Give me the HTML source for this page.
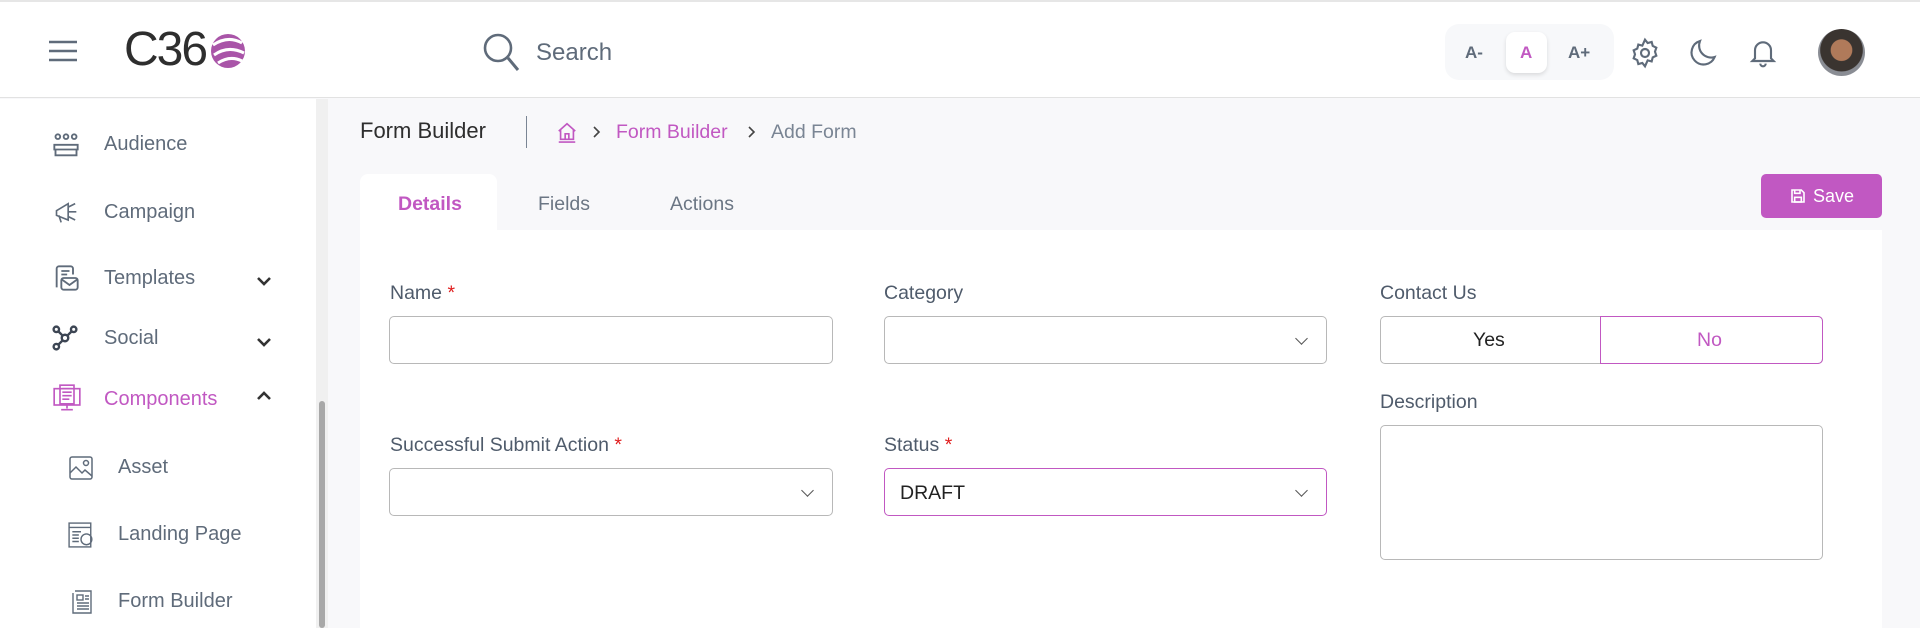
<!DOCTYPE html>
<html><head><meta charset="utf-8"><style>
*{box-sizing:border-box;margin:0;padding:0}
body{width:1920px;height:628px;overflow:hidden;background:#f8f8fa;font-family:"Liberation Sans",sans-serif;position:relative;color:#5f6b7a}
.abs{position:absolute}
#hdr{left:0;top:0;width:1920px;height:98px;background:#fff;border-top:2px solid #e6e6e6;border-bottom:1px solid #e2e2e2}
#side{left:0;top:99px;width:316px;height:529px;background:#fff}
.it{position:absolute;left:104px;font-size:20px;color:#5f6b7a}
.sub{left:118px}
.ic{position:absolute}
.chev{position:absolute;left:256px}
.lbl{position:absolute;font-size:19.5px;color:#4f5b6b}
.star{color:#e02020}
.inp{position:absolute;height:48px;border:1px solid #b8b8b8;border-radius:5px;background:#fff}
.dd::after{content:"";position:absolute;right:20px;top:17px;width:8px;height:8px;border-right:1.6px solid #555;border-bottom:1.6px solid #555;transform:rotate(45deg)}
</style></head><body>
<div id="hdr" class="abs">
 <svg class="abs" style="left:49px;top:38px" width="28" height="22"><g stroke="#5f6b7a" stroke-width="2.5"><line x1="0" y1="2" x2="28" y2="2"/><line x1="0" y1="11" x2="28" y2="11"/><line x1="0" y1="20" x2="28" y2="20"/></g></svg>
 <div class="abs" style="left:124px;top:20px;font-size:48px;color:#2e2e2e;letter-spacing:-2px">C36</div>
 <svg class="abs" style="left:208px;top:29px" width="40" height="40"><circle cx="20" cy="20" r="17" fill="#a955a8"/><path d="M5 14 Q20 4 34 12 M6 24 Q20 14 36 22 M10 32 Q22 24 34 30" stroke="#fff" stroke-width="3" fill="none"/></svg>
 <svg class="abs" style="left:482px;top:30px" width="40" height="40"><circle cx="16" cy="16" r="13" stroke="#5f6b7a" stroke-width="2.6" fill="none"/><line x1="26" y1="26" x2="36" y2="38" stroke="#5f6b7a" stroke-width="3"/></svg>
 <div class="abs" style="left:536px;top:37px;font-size:24px;color:#5f6b7a">Search</div>
 <div class="abs" style="left:1445px;top:22px;width:169px;height:56px;background:#f7f8fa;border-radius:14px"></div>
 <div class="abs" style="left:1506px;top:30px;width:41px;height:41px;background:#fff;border-radius:9px;box-shadow:0 2px 4px rgba(0,0,0,.12)"></div>
 <div class="abs" style="left:1465px;top:41px;font-size:17px;font-weight:bold;color:#5f6b7a">A-</div>
 <div class="abs" style="left:1520px;top:41px;font-size:17px;font-weight:bold;color:#c158c2">A</div>
 <div class="abs" style="left:1568px;top:41px;font-size:17px;font-weight:bold;color:#5f6b7a">A+</div>
 <svg class="abs" style="left:1629px;top:35px" width="32" height="32" viewBox="0 0 24 24" fill="none" stroke="#5f6b7a" stroke-width="1.6"><circle cx="12" cy="12" r="3"/><path d="M12 2l2 2.5 3-.8.8 3L20.5 8l-1 3 1 3-2.7 1.3-.8 3-3-.8L12 22l-2-2.5-3 .8-.8-3L3.5 16l1-3-1-3 2.7-1.3.8-3 3 .8z"/></svg>
 <svg class="abs" style="left:1688px;top:35px" width="32" height="32" viewBox="0 0 24 24" fill="none" stroke="#5f6b7a" stroke-width="1.6"><path d="M20 15A9 9 0 0 1 9 3a9 9 0 1 0 11 12z"/></svg>
 <svg class="abs" style="left:1747px;top:34px" width="32" height="34" viewBox="0 0 24 24" fill="none" stroke="#5f6b7a" stroke-width="1.6"><path d="M6 16V10a6 6 0 0 1 12 0v6l2 2H4z M10 20a2 2 0 0 0 4 0"/></svg>
 <div class="abs" style="left:1818px;top:27px;width:47px;height:47px;border-radius:50%;background:radial-gradient(circle at 50% 45%,#b07a5a 0 30%,#3a3430 32% 60%,#8a8d94 62%)"></div>
</div>
<div id="side" class="abs">
 <svg class="ic" style="left:52px;top:33px" width="28" height="28" viewBox="0 0 24 24" fill="none" stroke="#5f6b7a" stroke-width="1.6"><circle cx="5" cy="4" r="2"/><circle cx="12" cy="4" r="2"/><circle cx="19" cy="4" r="2"/><path d="M2 11h20v4H2zM3 15v5h18v-5"/></svg>
 <div class="it" style="top:34px">Audience</div>
 <svg class="ic" style="left:52px;top:100px" width="30" height="28" viewBox="0 0 24 24" fill="none" stroke="#5f6b7a" stroke-width="1.4"><path d="M3 10l10-6v14L3 14zM13 7l6-3M13 11h7M13 15l6 3M5 14l2 6"/></svg>
 <div class="it" style="top:102px">Campaign</div>
 <svg class="ic" style="left:52px;top:165px" width="28" height="28" viewBox="0 0 24 24" fill="none" stroke="#5f6b7a" stroke-width="1.6"><path d="M4 20V4a2 2 0 0 1 2-2h10a2 2 0 0 1 2 2v5M8 6h7M8 9h5"/><rect x="8" y="12" width="14" height="10" rx="2"/><path d="M8 13l7 5 7-5"/></svg>
 <div class="it" style="top:168px">Templates</div>
 <svg class="chev" style="top:177px" width="16" height="12"><path d="M2 2l6 6 6-6" stroke="#333" stroke-width="2.6" fill="none"/></svg>
 <svg class="ic" style="left:52px;top:226px" width="26" height="26" viewBox="0 0 24 24" fill="none" stroke="#3d4654" stroke-width="2.2"><circle cx="4" cy="4" r="2.5"/><circle cx="20" cy="4" r="2.5"/><circle cx="12" cy="12" r="3"/><circle cx="4" cy="20" r="2.5"/><path d="M6 6l4 4M18 6l-4 4M10 14l-4 4"/></svg>
 <div class="it" style="top:228px">Social</div>
 <svg class="chev" style="top:238px" width="16" height="12"><path d="M2 2l6 6 6-6" stroke="#333" stroke-width="2.6" fill="none"/></svg>
 <svg class="ic" style="left:52px;top:285px" width="30" height="28" viewBox="0 0 24 24" fill="none" stroke="#c158c2" stroke-width="1.4"><rect x="1" y="4" width="22" height="14"/><rect x="6" y="1" width="12" height="16"/><path d="M8 4h8M8 7h8M8 10h8M8 13h6M12 18v3M7 22h10"/></svg>
 <div class="it" style="top:289px;color:#c158c2">Components</div>
 <svg class="chev" style="top:291px" width="16" height="12"><path d="M2 9l6-6 6 6" stroke="#333" stroke-width="2.6" fill="none"/></svg>
 <svg class="ic" style="left:69px;top:357px" width="24" height="24" viewBox="0 0 24 24" fill="none" stroke="#5f6b7a" stroke-width="1.5"><rect x="1" y="1" width="22" height="22" rx="2"/><circle cx="17" cy="7" r="2.5"/><path d="M1 17l6-6 6 6 3-3 7 6"/></svg>
 <div class="it sub" style="top:357px">Asset</div>
 <svg class="ic" style="left:68px;top:423px" width="26" height="26" viewBox="0 0 24 24" fill="none" stroke="#5f6b7a" stroke-width="1.3"><rect x="1" y="1" width="20" height="22"/><path d="M1 5h20M4 9h8M4 12h6M4 15h6M4 18h6"/><circle cx="17" cy="16" r="5"/></svg>
 <div class="it sub" style="top:424px">Landing Page</div>
 <svg class="ic" style="left:70px;top:490px" width="24" height="26" viewBox="0 0 24 24" fill="none" stroke="#5f6b7a" stroke-width="1.4"><path d="M5 1h16v22H3V3"/><rect x="7" y="5" width="6" height="5"/><path d="M15 6h4M15 9h4M7 13h12M7 16h12M7 19h12"/></svg>
 <div class="it sub" style="top:491px">Form Builder</div>
</div>
<div class="abs" style="left:316px;top:99px;width:12px;height:529px;background:#f0f0f0"></div>
<div class="abs" style="left:319px;top:401px;width:6px;height:227px;background:#a8a8a8;border-radius:3px"></div>

<div class="abs" style="left:360px;top:118px;font-size:22px;color:#2e2e2e">Form Builder</div>
<div class="abs" style="left:526px;top:116px;width:1px;height:32px;background:#7a8594"></div>
<svg class="abs" style="left:556px;top:121px" width="22" height="22" viewBox="0 0 24 24" fill="none" stroke="#c158c2" stroke-width="1.8"><path d="M3 11L12 3l9 8M5 10v10h14V10M10 20v-6h4v6M3 23h18"/></svg>
<svg class="abs" style="left:592px;top:125px" width="10" height="14"><path d="M2 2l5 5-5 5" stroke="#444" stroke-width="1.6" fill="none"/></svg>
<div class="abs" style="left:616px;top:121px;font-size:19.5px;color:#c158c2">Form Builder</div>
<svg class="abs" style="left:747px;top:125px" width="10" height="14"><path d="M2 2l5 5-5 5" stroke="#444" stroke-width="1.6" fill="none"/></svg>
<div class="abs" style="left:771px;top:121px;font-size:19.5px;color:#7a8594">Add Form</div>

<div class="abs" style="left:360px;top:174px;width:137px;height:60px;background:#fff;border-radius:8px 8px 0 0"></div>
<div class="abs" style="left:398px;top:193px;font-size:19.5px;font-weight:bold;color:#c158c2">Details</div>
<div class="abs" style="left:538px;top:193px;font-size:19.5px;color:#6b7684">Fields</div>
<div class="abs" style="left:670px;top:193px;font-size:19.5px;color:#6b7684">Actions</div>
<div class="abs" style="left:1761px;top:174px;width:121px;height:44px;background:#c158c2;border-radius:5px;color:#fff;font-size:18px;padding:12px 0 0 52px">Save</div>
<svg class="abs" style="left:1790px;top:188px" width="16" height="16" viewBox="0 0 24 24" fill="none" stroke="#fff" stroke-width="2.4"><path d="M3 3h14l4 4v14H3z"/><rect x="7" y="14" width="10" height="7"/><path d="M7 3v5h8V3"/></svg>

<div class="abs" style="left:360px;top:230px;width:1522px;height:398px;background:#fff"></div>
<div class="lbl" style="left:390px;top:282px">Name <span class="star">*</span></div>
<div class="inp" style="left:389px;top:316px;width:444px"></div>
<div class="lbl" style="left:884px;top:282px">Category</div>
<div class="inp dd" style="left:884px;top:316px;width:443px"></div>
<div class="lbl" style="left:1380px;top:282px">Contact Us</div>
<div class="inp" style="left:1380px;top:316px;width:443px"></div>
<div class="abs" style="left:1600px;top:316px;width:223px;height:48px;border:1px solid #c158c2;border-radius:0 5px 5px 0"></div>
<div class="abs" style="left:1473px;top:329px;font-size:19.5px;color:#222">Yes</div>
<div class="abs" style="left:1697px;top:329px;font-size:19.5px;color:#c158c2">No</div>
<div class="lbl" style="left:1380px;top:391px">Description</div>
<div class="inp" style="left:1380px;top:425px;width:443px;height:135px"></div>
<div class="lbl" style="left:390px;top:434px">Successful Submit Action <span class="star">*</span></div>
<div class="inp dd" style="left:389px;top:468px;width:444px"></div>
<div class="lbl" style="left:884px;top:434px">Status <span class="star">*</span></div>
<div class="inp dd" style="left:884px;top:468px;width:443px;border-color:#c158c2"></div>
<div class="abs" style="left:900px;top:482px;font-size:19.5px;color:#222">DRAFT</div>
</body></html>
